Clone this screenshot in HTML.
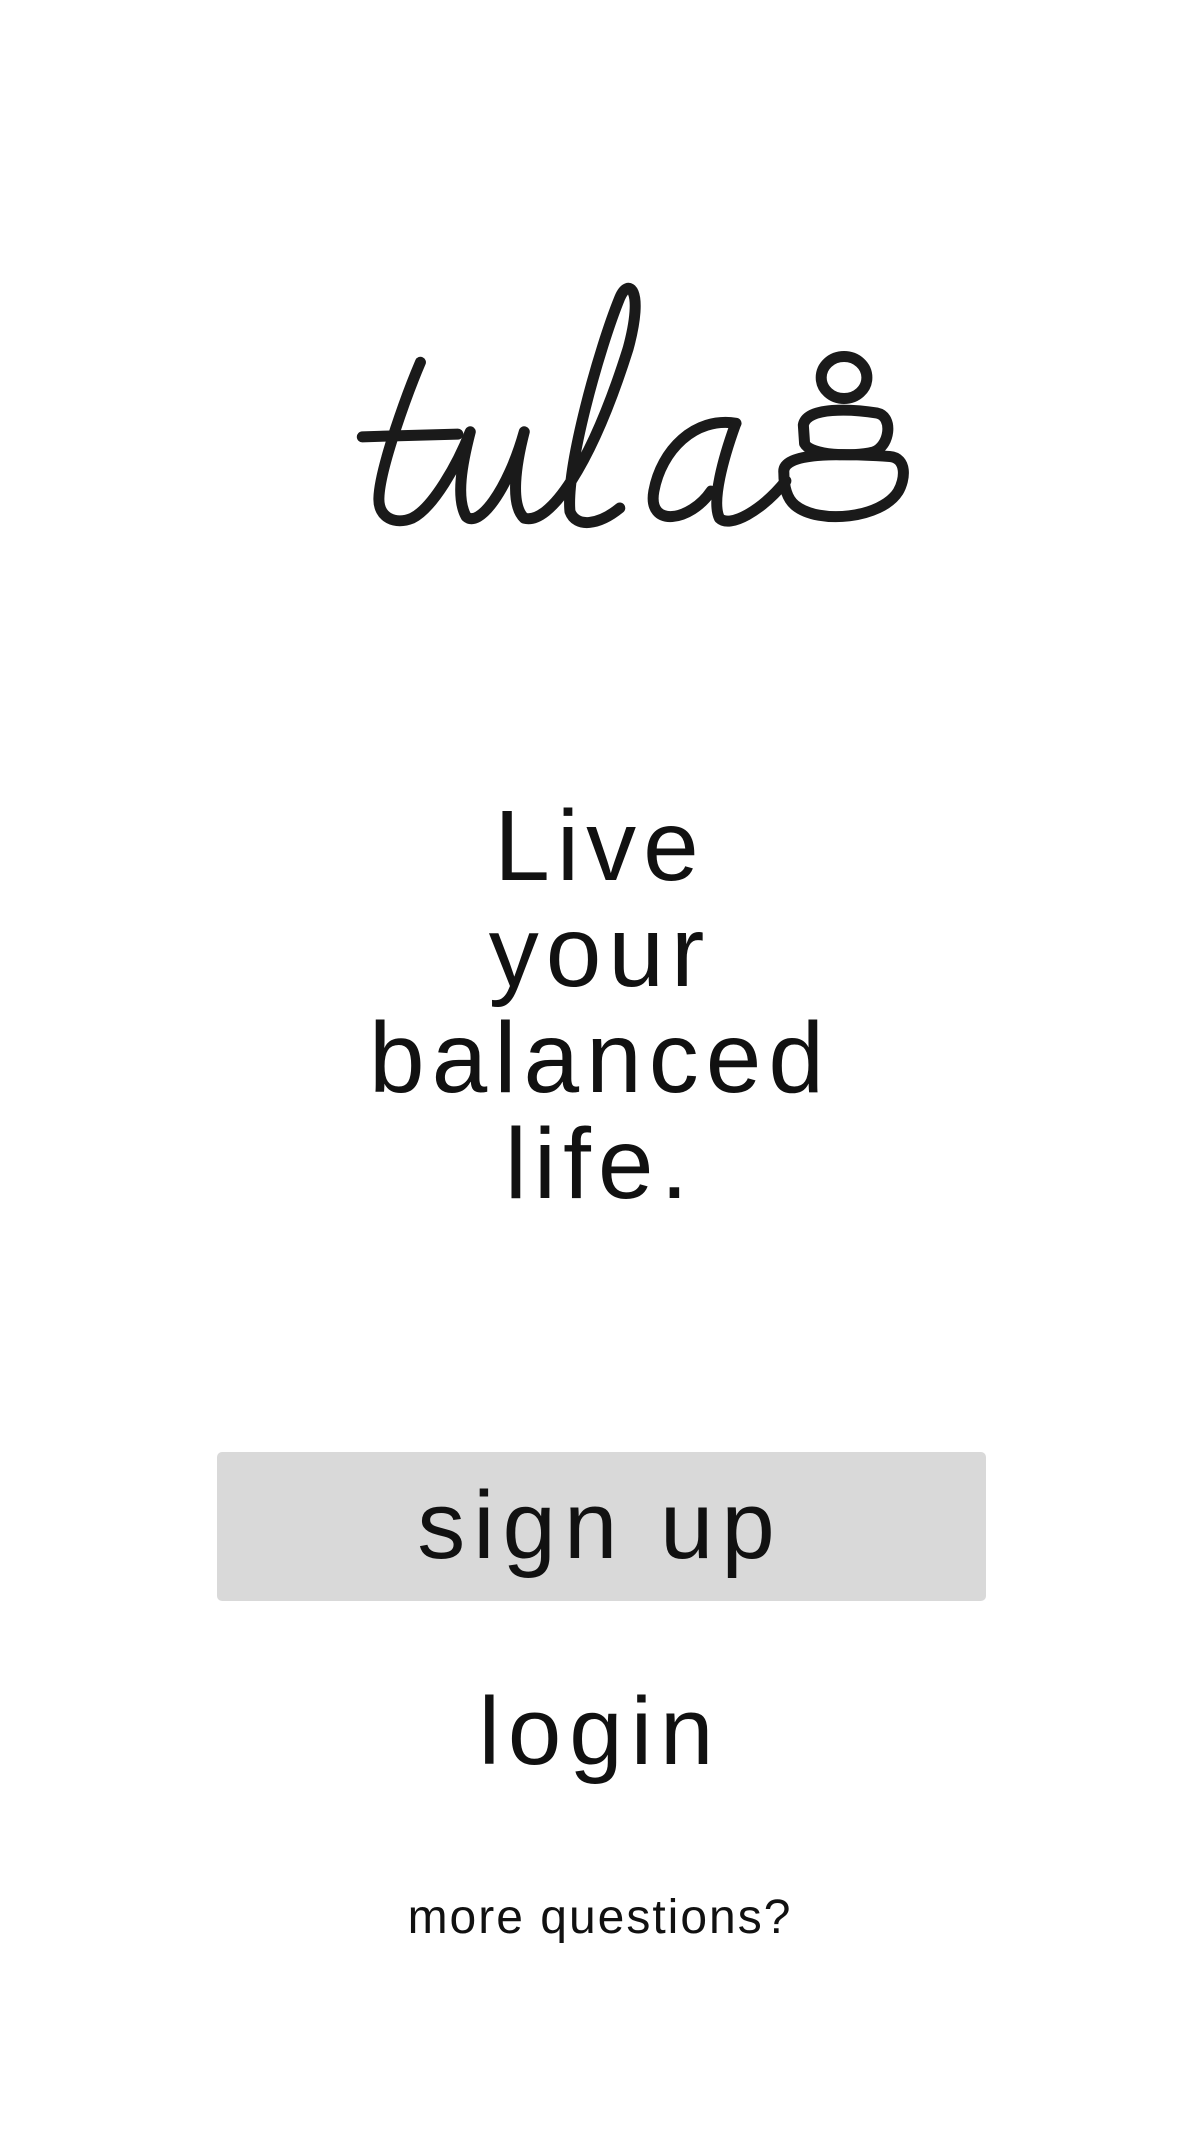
<!DOCTYPE html>
<html><head><meta charset="utf-8"><style>
html,body{margin:0;padding:0;background:#fff;}
body{width:1200px;height:2132px;position:relative;overflow:hidden;font-family:"Liberation Sans",sans-serif;color:#111;}
.t{position:absolute;left:0;width:1200px;text-align:center;white-space:nowrap;}
.h{font-size:100px;line-height:106px;top:793px;letter-spacing:7px;}
.btn{position:absolute;left:217px;top:1452px;width:769px;height:149px;background:#d9d9d9;border-radius:5px;}
</style></head><body>
<svg width="1200" height="2132" style="position:absolute;left:0;top:0">
<g transform="translate(300,247) scale(0.4153,0.339)" fill="none" stroke="#1a1a1a" stroke-width="11" stroke-linecap="round" stroke-linejoin="round">
<path vector-effect="non-scaling-stroke" d="M290,340 C262,420 192,650 190,740 C188,800 230,820 270,800 C320,770 380,640 410,545 C390,640 375,740 400,795 C430,830 500,720 540,545 C520,640 505,760 540,800 C600,820 700,650 790,300 C830,120 790,90 770,150 C720,300 640,650 650,780 C665,830 720,820 770,770"/>
<path vector-effect="non-scaling-stroke" d="M150,560 L380,552"/>
<path vector-effect="non-scaling-stroke" d="M1050,520 C950,500 870,600 852,720 C836,830 940,810 990,720"/>
<path vector-effect="non-scaling-stroke" d="M1048,525 C1020,620 990,750 1010,800 C1035,830 1110,780 1170,690"/>
<ellipse vector-effect="non-scaling-stroke" cx="1310" cy="385" rx="55" ry="62"/>
<path vector-effect="non-scaling-stroke" d="M1212,525 C1220,470 1330,478 1390,490 C1430,500 1420,590 1380,605 C1330,620 1230,615 1215,580 Z"/>
<path vector-effect="non-scaling-stroke" d="M1165,665 C1160,605 1300,608 1420,618 C1462,622 1458,685 1440,722 C1400,800 1250,820 1192,762 C1172,742 1165,705 1165,665 Z"/>
</g>
</svg>
<div class="t h">Live<br>your<br>balanced<br>life.</div>
<div class="btn"></div>
<div class="t" style="top:1471px;font-size:96px;line-height:110px;letter-spacing:8px;">sign up</div>
<div class="t" style="top:1677px;font-size:96px;line-height:110px;letter-spacing:8px;">login</div>
<div class="t" style="top:1888px;font-size:48px;line-height:60px;letter-spacing:2px;">more questions?</div>
</body></html>
